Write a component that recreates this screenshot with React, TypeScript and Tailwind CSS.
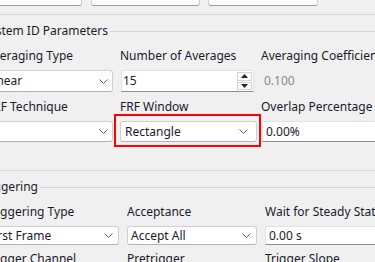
import React from "react";

const font = { fontFamily: '"Segoe UI", "Noto Sans", "Open Sans", sans-serif' };

function Chevron() {
  return (
    <svg width="9" height="5" viewBox="0 0 9 5" className="shrink-0">
      <polyline points="0.5,0.5 4.5,4.5 8.5,0.5" fill="none" stroke="#606060" strokeWidth="1" />
    </svg>
  );
}

function Combo({ value, className }: { value: string; className: string }) {
  return (
    <div
      className={`flex items-center justify-between rounded-[3px] border border-[#d0d0d0] border-b-[#b4b4b4] bg-white ${className}`}
    >
      <span className="whitespace-nowrap">{value}</span>
      <Chevron />
    </div>
  );
}

function Field({ value, className }: { value: string; className: string }) {
  return (
    <div
      className={`flex items-center border border-[#e2e2e2] border-b-[#8e8e8e] bg-white pl-[3px] whitespace-nowrap ${className}`}
    >
      {value}
    </div>
  );
}

function Spin({ value }: { value: string }) {
  return (
    <div className="ml-[1px] flex h-[22px] w-[133px] border border-[#e2e2e2] border-b-[#8e8e8e] bg-white">
      <span className="flex flex-1 items-center pl-[1px]">{value}</span>
      <div className="flex w-[16px] flex-col gap-[1px] py-[1px] pr-[1px]">
        <div className="flex flex-1 items-center justify-center border border-[#d4d4d4] bg-[#fbfbfb]">
          <svg width="7" height="4" viewBox="0 0 7 4">
            <polygon points="0,4 3.5,0 7,4" fill="#222" />
          </svg>
        </div>
        <div className="flex flex-1 items-center justify-center border border-[#d4d4d4] bg-[#fbfbfb]">
          <svg width="7" height="4" viewBox="0 0 7 4">
            <polygon points="0,0 3.5,4 7,0" fill="#222" />
          </svg>
        </div>
      </div>
    </div>
  );
}

function GroupTitle({ title, width }: { title: string; width: string }) {
  return (
    <div className="flex h-[16px] items-center">
      <div className={`flex shrink-0 justify-end whitespace-nowrap ${width}`}>
        <span>{title}</span>
      </div>
      <div className="ml-[2px] flex-1 border-t border-[#d6d6d6]" />
    </div>
  );
}

function Label({ text, className = "" }: { text: string; className?: string }) {
  return <div className={`h-[16px] whitespace-nowrap leading-[16px] ${className}`}>{text}</div>;
}

export default function App() {
  return (
    <div
      className="relative h-[262px] w-[375px] overflow-hidden bg-[#f0f0f0] text-[12px] text-[#1a1a2c]"
      style={font}
    >
      {/* boxes from the panel above */}
      <div className="-ml-[27px] -mt-[16px] flex gap-[9px]">
        <div className="h-[22px] w-[109px] rounded-[3px] border border-[#cfcfcf] border-b-[#9c9c9c] bg-white" />
        <div className="h-[22px] w-[109px] rounded-[3px] border border-[#cfcfcf] border-b-[#9c9c9c] bg-white" />
        <div className="ml-[-1px] h-[22px] w-[110px] rounded-[3px] border border-[#cfcfcf] border-b-[#9c9c9c] bg-white" />
      </div>
      <div className="mt-[8px] border-t border-[#d8d8d8]" />

      {/* System ID Parameters */}
      <div className="mt-[8px]">
        <GroupTitle title="System ID Parameters" width="w-[108px]" />
      </div>
      <div className="-ml-[18px] mt-[9px] flex">
        <div className="flex w-[138px] shrink-0 flex-col">
          <Label text="Averaging Type" className="pl-[4px]" />
          <Combo value="Linear" className="mt-[6px] h-[22px] w-[131px] pl-[4px] pr-[4px]" />
          <Label text="FRF Technique" className="mt-[7px] pl-[5px]" />
          <Combo value="H1" className="mt-[6px] h-[21px] w-[131px] pl-[1px] pr-[4px]" />
        </div>
        <div className="flex w-[141px] shrink-0 flex-col">
          <Label text="Number of Averages" />
          <div className="mt-[6px]">
            <Spin value="15" />
          </div>
          <Label text="FRF Window" className="mt-[7px]" />
          <Combo value="Rectangle" className="mt-[6px] h-[21px] w-[137px] pl-[4px] pr-[8px]" />
        </div>
        <div className="flex flex-1 flex-col">
          <Label text="Averaging Coefficient" />
          <div className="mt-[6px] flex h-[22px] items-center pl-[3px] text-[#8a8a8a]">0.100</div>
          <Label text="Overlap Percentage" className="mt-[7px]" />
          <Field value="0.00%" className="ml-[1px] mt-[6px] h-[21px] border-r-0" />
        </div>
      </div>
      <div className="mt-[28px] border-t border-[#d8d8d8]" />

      {/* Triggering */}
      <div className="mt-[8px]">
        <GroupTitle title="Triggering" width="w-[38px]" />
      </div>
      <div className="-ml-[18px] mt-[9px] flex">
        <div className="flex w-[145px] shrink-0 flex-col">
          <Label text="Triggering Type" className="pl-[4px]" />
          <Combo value="First Frame" className="mt-[6px] h-[19px] w-[137px] pl-[5px] pr-[5px]" />
          <Label text="Trigger Channel" className="mt-[6px] pl-[4px]" />
        </div>
        <div className="flex w-[138px] shrink-0 flex-col">
          <Label text="Acceptance" />
          <Combo value="Accept All" className="mt-[6px] h-[19px] w-[130px] pl-[3px] pr-[5px]" />
          <Label text="Pretrigger" className="mt-[6px]" />
        </div>
        <div className="flex flex-1 flex-col">
          <Label text="Wait for Steady State" />
          <Field value="0.00 s" className="mt-[6px] h-[19px] border-r-0" />
          <Label text="Trigger Slope" className="mt-[6px]" />
        </div>
      </div>

      {/* highlight annotation */}
      <div className="pointer-events-none absolute left-[114px] top-[114px] h-[33px] w-[147px] border-2 border-[#ff0000]" />
    </div>
  );
}
